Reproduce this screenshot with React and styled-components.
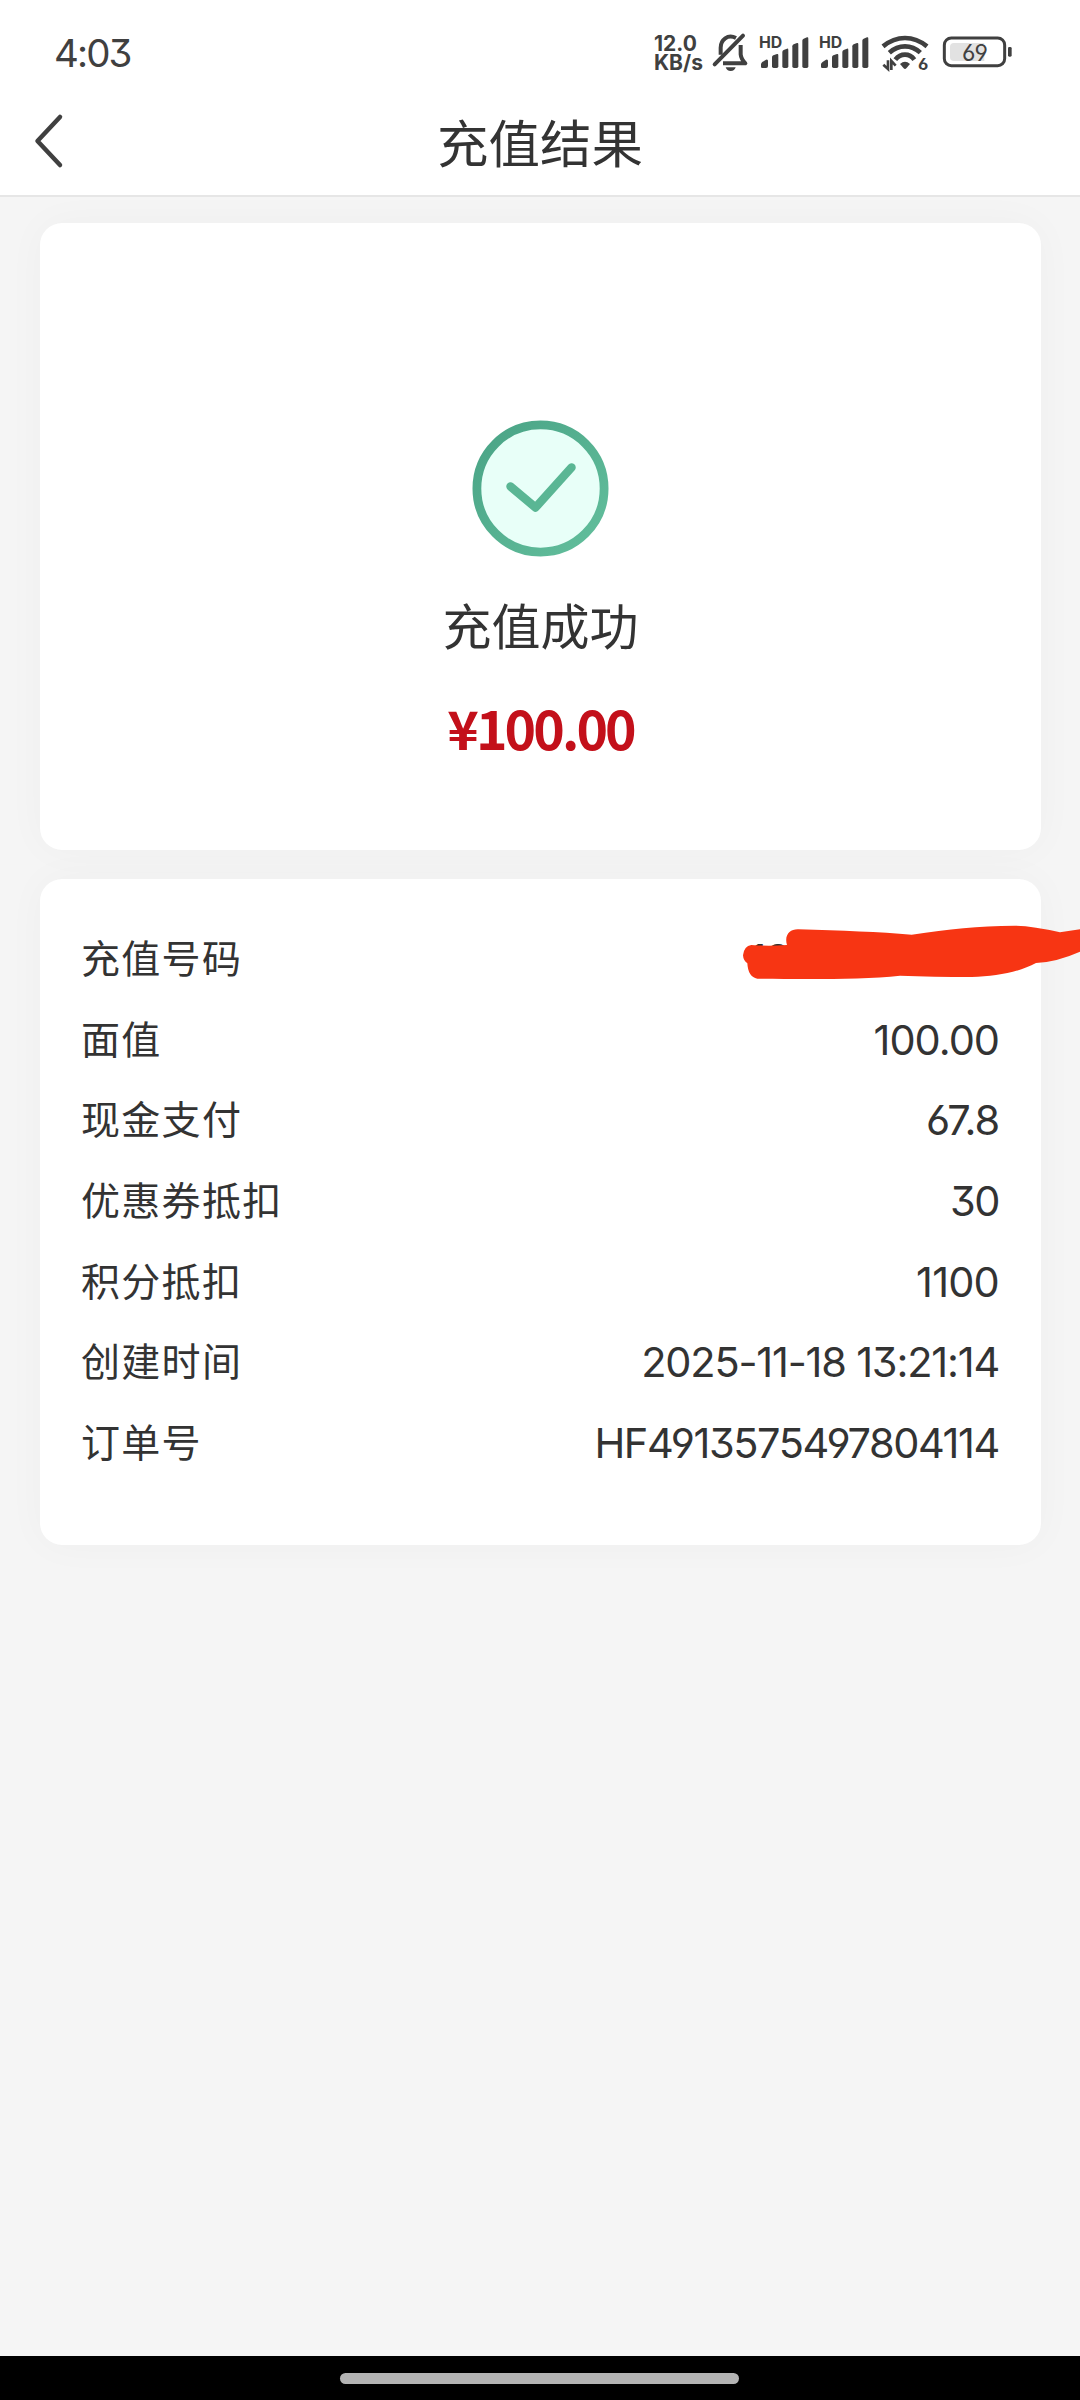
import styled, { createGlobalStyle } from "styled-components"

const GlobalStyle = createGlobalStyle`
    * {
        box-sizing: border-box;
    }

    body {
        margin: 0;
        background: #f5f5f5;
        color: #333;
        font-family: Inter, "Noto Sans CJK SC", sans-serif;
    }
`

const Page = styled.div`
    width: 1080px;
    height: 2400px;
    display: flex;
    flex-direction: column;
    overflow: hidden;
    background: #f5f5f5;
`

const StatusBar = styled.div`
    height: 104px;
    padding: 0 67px 0 54px;
    display: flex;
    align-items: center;
    background: #fff;
    color: #404040;
`

const Clock = styled.span`
    font-size: 38.5px;
    line-height: 40px;
    letter-spacing: -1.9px;
    font-feature-settings: "cv09";
    margin-right: auto;
    padding-top: 1px;
`

const NetSpeed = styled.div`
    width: 48px;
    margin-right: 10px;
    font-size: 21px;
    font-weight: 700;
    line-height: 19.5px;
    padding-top: 2px;
    white-space: nowrap;

    span {
        display: block;
    }
`

const StatusIcon = styled.svg`
    display: block;
    flex: none;
    width: ${props => props.$width}px;
    height: 40px;
    margin-left: ${props => props.$gap || 0}px;
    overflow: visible;
    font-family: Inter, sans-serif;
`

const Header = styled.header`
    height: 93px;
    display: grid;
    grid-template-columns: 120px 1fr 120px;
    align-items: center;
    background: #fff;
    border-bottom: 2px solid #e6e6e6;
`

const BackButton = styled.button`
    border: 0;
    background: transparent;
    padding: 0 0 0 32px;
    height: 56px;
    margin-top: -17px;
    text-align: left;

    svg {
        display: block;
    }
`

const Title = styled.h1`
    margin: -11px 0 0;
    font-size: 51.5px;
    line-height: 60px;
    font-weight: 400;
    text-align: center;
`

const Content = styled.main`
    flex: 1;
    padding: 26px 39px 0 40px;
    display: flex;
    flex-direction: column;
    gap: 29px;
`

const Card = styled.section`
    background: #fff;
    border-radius: 22px;
    box-shadow: 0 0 40px rgba(0, 0, 0, 0.03);
`

const ResultCard = styled(Card)`
    height: 627px;
    padding-top: 197px;
    display: flex;
    flex-direction: column;
    align-items: center;
`

const ResultText = styled.p`
    margin: 35px 0 0;
    font-size: 49px;
    line-height: 70px;
`

const Amount = styled.p`
    margin: 29px 0 0;
    font-family: "Noto Sans CJK SC", sans-serif;
    font-size: 53.5px;
    line-height: 70px;
    font-weight: 700;
    letter-spacing: -2.9px;
    color: #c3101a;
`

const DetailCard = styled(Card)`
    height: 666px;
    padding: 39px 42px 0 41px;
`

const Row = styled.div`
    position: relative;
    height: 80.7px;
    display: flex;
    align-items: center;
    justify-content: space-between;
`

const Label = styled.span`
    font-size: 39px;
    letter-spacing: 1.3px;
    margin-top: -5px;
`

const Value = styled.span`
    font-size: 41.5px;
    letter-spacing: ${props => props.$spacing || -1}px;
    font-feature-settings: "cv03", "cv04", "cv09";
    padding-right: ${props => props.$offset || 0}px;
    padding-top: 1px;
`

const Scribble = styled.svg`
    position: absolute;
    right: -81px;
    top: 2px;
    width: 340px;
    height: 60px;
`

const BottomBar = styled.div`
    height: 44px;
    display: flex;
    justify-content: center;
    padding: 17px 1px 0 0;
    background: #000;
`

const HomePill = styled.div`
    width: 399px;
    height: 11px;
    border-radius: 6px;
    background: #b3b3b3;
`

const detalles = [
    { label: "充值号码", value: "18", offset: 209, tachado: true },
    { label: "面值", value: "100.00" },
    { label: "现金支付", value: "67.8", spacing: -1.1 },
    { label: "优惠券抵扣", value: "30", spacing: -1.4 },
    { label: "积分抵扣", value: "1100", spacing: -0.8 },
    { label: "创建时间", value: "2025-11-18 13:21:14", spacing: -1.2 },
    { label: "订单号", value: "HF4913575497804114", spacing: -1.4 },
]

const BellOff = () => (
    <StatusIcon $width={37} viewBox="216 36 111 120" fill="none" stroke="#404040" strokeWidth="12">
        <path d="M288 54C263 41 242 60 242 83V104" />
        <path d="M302 75V103Q303 116 316 130H249" strokeLinejoin="round" />
        <path d="M224 133L309 47" strokeWidth="12" strokeLinecap="round" />
        <path d="M257 142H287Q284 153 272 153Q260 153 257 142Z" fill="#404040" stroke="none" />
    </StatusIcon>
)

const Signal = ({ gap }) => (
    <StatusIcon $width={51} $gap={gap} viewBox="357 36 153 120" fill="#404040">
        <text x="357" y="84" fontSize="48" fontWeight="700" textLength="70" lengthAdjust="spacingAndGlyphs">HD</text>
        <path d="M363 140V131Q365 126 378 119Q384 117 384 123V138Q384 144 378 144H367Q363 144 363 140Z" />
        <path d="M396 112Q396 108 400 106L411 102Q415 101 415 106V139Q415 144 410 144H401Q396 144 396 139Z" />
        <path d="M427 96Q427 92 431 90L441 86Q445 85 445 90V139Q445 144 440 144H432Q427 144 427 139Z" />
        <path d="M457 79Q457 75 461 73L471 69Q475 68 475 73V139Q475 144 470 144H462Q457 144 457 139Z" />
        <path d="M487 62Q487 58 491 56L501 52Q505 51 505 56V139Q505 144 500 144H492Q487 144 487 139Z" />
    </StatusIcon>
)

const Wifi = () => (
    <StatusIcon $width={50} $gap={10} viewBox="150 36 150 120" fill="none" stroke="#404040" strokeWidth="14">
        <path d="M159 79Q190 54 225 54Q260 54 291 79" />
        <path d="M178 98Q199 79 225 79Q251 79 271 98" />
        <path d="M196 119Q208 104 225 104Q242 104 253 119" />
        <path d="M210 132Q225 119 240 132L229 145Q225 149 221 145Z" fill="#404040" stroke="none" />
        <path d="M174 121V147L160 134M184 150V123L197 137" strokeWidth="8" />
        <text x="264" y="150" fill="#404040" stroke="none" fontSize="47" fontWeight="700" textLength="31" lengthAdjust="spacingAndGlyphs" style={{ fontFeatureSettings: '"cv03"' }}>6</text>
    </StatusIcon>
)

const Battery = () => (
    <StatusIcon $width={71} $gap={12} viewBox="336 36 213 120">
        <rect x="343" y="54" width="181" height="83" rx="21" fill="none" stroke="#404040" strokeWidth="9" />
        <path d="M372 69H463V123H372Q360 123 360 111V81Q360 69 372 69Z" fill="#e2e2e2" />
        <rect x="534" y="81" width="11" height="29" rx="4" fill="#404040" />
        <text x="396" y="123" fill="#404040" fontSize="70" textLength="78" lengthAdjust="spacingAndGlyphs" style={{ fontFeatureSettings: '"cv03", "cv04"' }}>69</text>
    </StatusIcon>
)

const SuccessIcon = () => (
    <svg width="138" height="138" viewBox="0.5 0.500 138 138" fill="none">
        <defs>
            <linearGradient id="verde" x1="0" y1="0" x2="138" y2="138" gradientUnits="userSpaceOnUse">
                <stop offset="0.1" stopColor="#4ba587" />
                <stop offset="0.9" stopColor="#61bd9b" />
            </linearGradient>
        </defs>
        <circle cx="69" cy="69" r="63.6" fill="#e8fff8" stroke="url(#verde)" strokeWidth="8.8" />
        <path d="M39 67L64 88L100 48" stroke="#5ab694" strokeWidth="8.5" strokeLinecap="round" strokeLinejoin="round" />
    </svg>
)

// marcador rojo que tapa el numero
const Tachado = () => (
    <Scribble viewBox="60 180 1020 180">
        <path
            fill="#f73513"
            d="M94 255Q145 259 201 255C192 225 210 207 235 208Q430 213 575 224C690 208 770 197 885 197Q940 198 1020 217L1080 208V275Q1010 306 948 309C900 335 830 350 755 351Q640 351 540 347C420 360 230 357 112 356Q84 351 82 310Q70 302 69 286Q72 258 94 255Z"
        />
    </Scribble>
)

const App = () => {
    return <>
        <GlobalStyle />
        <Page>
            <StatusBar>
                <Clock>4:03</Clock>
                <NetSpeed>
                    <span>12.0</span>
                    <span>KB/s</span>
                </NetSpeed>
                <BellOff />
                <Signal gap={10} />
                <Signal gap={9} />
                <Wifi />
                <Battery />
            </StatusBar>
            <Header>
                <BackButton aria-label="返回">
                    <svg width="34" height="56" viewBox="0 0 34 56" fill="none">
                        <path d="M28 4L5.500 28L28 52" stroke="#404040" strokeWidth="4.500" strokeLinecap="round" strokeLinejoin="round" />
                    </svg>
                </BackButton>
                <Title>充值结果</Title>
            </Header>
            <Content>
                <ResultCard>
                    <SuccessIcon />
                    <ResultText>充值成功</ResultText>
                    <Amount>¥100.00</Amount>
                </ResultCard>
                <DetailCard>
                    {
                        detalles.map((detalle) => {
                            return <Row key={detalle.label}>
                                <Label>{detalle.label}</Label>
                                <Value $offset={detalle.offset} $spacing={detalle.spacing}>{detalle.value}</Value>
                                {detalle.tachado && <Tachado />}
                            </Row>
                        })
                    }
                </DetailCard>
            </Content>
            <BottomBar>
                <HomePill />
            </BottomBar>
        </Page>
    </>
}

export default App
